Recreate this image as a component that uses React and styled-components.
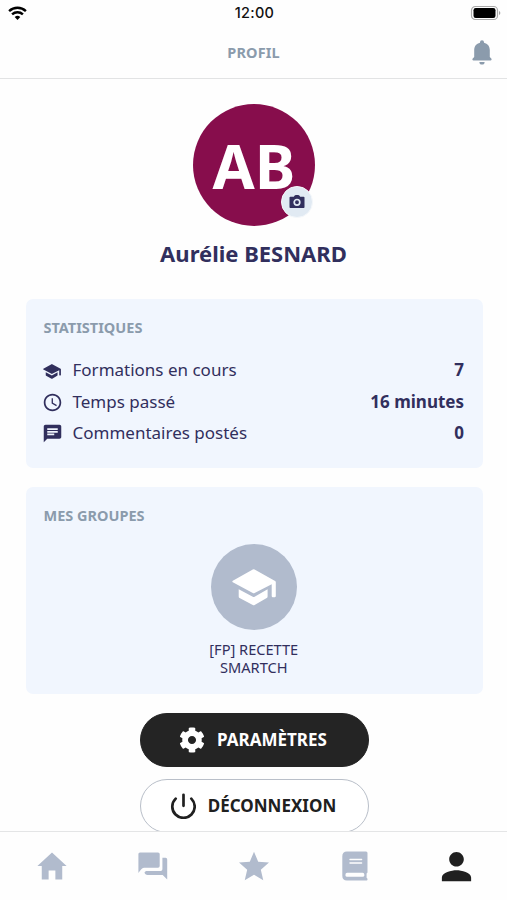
import styled, { createGlobalStyle } from "styled-components";
import { FaCog } from "react-icons/fa";
import { IoMdHome, IoMdPerson, IoMdStar } from "react-icons/io";
import { MdAccessTime, MdChat } from "react-icons/md";

const GlobalStyle = createGlobalStyle`
  * {
    box-sizing: border-box;
  }
  body {
    margin: 0;
    background: #fefefe;
    font-family: "Noto Sans", "Open Sans", sans-serif;
  }
  svg {
    display: block;
    flex-shrink: 0;
  }
`;

const Screen = styled.div`
  width: 507px;
  height: 900px;
  display: flex;
  flex-direction: column;
  overflow: hidden;
  color: #312f5d;
`;

const StatusBar = styled.div`
  height: 26px;
  flex-shrink: 0;
  display: grid;
  grid-template-columns: 1fr auto 1fr;
  align-items: center;
  padding: 0 6px 0 8px;
`;

const Clock = styled.span`
  font-family: Inter, sans-serif;
  font-size: 14.5px;
  font-weight: 500;
  letter-spacing: 0.25px;
  line-height: 26px;
  color: #111;
`;

const StatusEnd = styled.div`
  justify-self: end;
`;

const Header = styled.header`
  height: 53px;
  flex-shrink: 0;
  display: grid;
  grid-template-columns: 1fr auto 1fr;
  align-items: center;
  padding: 0 15px;
  border-bottom: 1px solid #e2e3e4;
`;

const HeaderTitle = styled.h1`
  grid-column: 2;
  margin: 0;
  padding-bottom: 1px;
  font-size: 14.5px;
  line-height: 20px;
  font-weight: 700;
  letter-spacing: 0.1px;
  color: #8b9bac;
`;

const Content = styled.main`
  flex: 1;
  min-height: 0;
  overflow: hidden;
  display: flex;
  flex-direction: column;
  align-items: center;
  padding: 25px 24.5px 0 25.5px;
`;

const Avatar = styled.div`
  position: relative;
  width: 122px;
  height: 122px;
  flex-shrink: 0;
  border-radius: 50%;
  background: #870d4c;
  color: #fff;
  font-size: 61px;
  line-height: 124px;
  font-weight: 700;
  text-align: center;
`;

const CameraBadge = styled.div`
  position: absolute;
  right: 2px;
  bottom: 8px;
  width: 32px;
  height: 32px;
  border-radius: 50%;
  border: 1px solid #f5f8fb;
  background: #e1eaf3;
  display: flex;
  align-items: center;
  justify-content: center;
`;

const Name = styled.h2`
  margin: 11px 1px 0 0;
  font-size: 22px;
  line-height: 32px;
  font-weight: 700;
`;

const Card = styled.section`
  width: 100%;
  height: ${(props) => props.$height}px;
  flex-shrink: 0;
  margin-top: ${(props) => props.$gap}px;
  padding: 17px 18.5px 0 18px;
  border-radius: 7px;
  background: #f1f6fe;
`;

const CardTitle = styled.h3`
  margin: 0;
  font-size: 14.5px;
  line-height: 22px;
  font-weight: 700;
  color: #8b9bac;
`;

const StatList = styled.ul`
  list-style: none;
  margin: 16px 0 0;
  padding: 0;
`;

const Stat = styled.li`
  height: 31.4px;
  display: flex;
  align-items: center;
  font-size: 17px;
`;

const StatIcon = styled.span`
  width: 20px;
  margin: 3px 10.5px 0 -1.5px;
  display: flex;
  justify-content: center;
`;

const StatLabel = styled.span`
  flex: 1;
`;

const StatValue = styled.span`
  font-weight: 700;
`;

const Group = styled.div`
  display: flex;
  flex-direction: column;
  align-items: center;
  margin-top: 18px;
`;

const GroupIcon = styled.div`
  width: 86px;
  height: 86px;
  border-radius: 50%;
  background: #b1bbcd;
  color: #fff;
  display: flex;
  align-items: center;
  justify-content: center;
`;

const GroupName = styled.p`
  width: 110px;
  margin: 11px 0 0;
  font-size: 14.6px;
  line-height: 17.5px;
  text-align: center;
`;

const Button = styled.button`
  width: 229px;
  height: 54px;
  flex-shrink: 0;
  margin: ${(props) => props.$gap}px 0 0;
  padding: 0 2px 1px 0;
  display: flex;
  align-items: center;
  justify-content: center;
  gap: 12px;
  border-radius: 27px;
  border: 1px solid ${(props) => (props.$dark ? "#242424" : "#b9bfc9")};
  background: ${(props) => (props.$dark ? "#242424" : "#fff")};
  color: ${(props) => (props.$dark ? "#fff" : "#202020")};
  font: 700 17px "Noto Sans", sans-serif;
`;

const TabBar = styled.nav`
  height: 69px;
  flex-shrink: 0;
  display: grid;
  grid-template-columns: repeat(5, 1fr);
  padding-left: 1px;
  border-top: 1px solid #e4e5e6;
  background: #fefefe;
`;

const Tab = styled.a`
  display: flex;
  align-items: center;
  justify-content: center;
  color: ${(props) => (props.$active ? "#202020" : "#b1bbcd")};
`;

const WifiIcon = () => (
  <svg width="20" height="15" viewBox="0 0 20 15" fill="none" stroke="#000" strokeWidth="2.4">
    <path d="M1.1 5.1a12.3 12.3 0 0 1 16.8 0" />
    <path d="M4.1 8.4a7.9 7.9 0 0 1 10.8 0" />
    <path d="M9.5 14 6.7 11.1a4 4 0 0 1 5.6 0z" fill="#000" stroke="none" />
  </svg>
);

const BatteryIcon = () => (
  <svg width="31" height="16" viewBox="0 0 31 16">
    <rect x="1.5" y="1.5" width="26" height="13" rx="3.8" fill="#fff" stroke="#aaa" strokeWidth="1.2" />
    <rect x="3.5" y="3" width="22" height="10" rx="2.2" fill="#000" />
    <path d="M29.1 6c1.6.5 1.6 3.5 0 4z" fill="#999" />
  </svg>
);

const BellIcon = () => (
  <svg width="20" height="25" viewBox="0 0 20 25" fill="#8b9bac">
    <path d="M10 .3a2 2 0 0 1 2 2v.5c3.7.8 5.8 3.6 5.8 7.2v7l1.5 1.5c.7.9.3 1.9-.8 1.9h-17c-1.1 0-1.500-1-.8-1.9L2.2 17v-7c0-3.6 2.100-6.4 5.8-7.2v-.5a2 2 0 0 1 2-2z" />
    <path d="M7.4 22h5.2a2.6 2.6 0 0 1-5.2 0z" />
  </svg>
);

const CameraIcon = () => (
  <svg width="16" height="14" viewBox="0 0 16 14">
    <path
      d="M4.8 1.7 5.7.6C6 .2 6.3 0 6.8 0h2.4c.5 0 .8.2 1.1.6l.9 1.1h3.4c.6 0 .9.4.9.9v9.4c0 .6-.4 1-1 1h-13c-.6 0-1-.4-1-1V2.6c0-.5.4-.9.9-.9z"
      fill="#312f5d"
    />
    <circle cx="8" cy="7.3" r="2.8" fill="none" stroke="#e1eaf3" strokeWidth="1.7" />
  </svg>
);

const PowerIcon = () => (
  <svg width="26" height="26" viewBox="0 0 26 26" fill="none" stroke="#202020" strokeWidth="2.7" strokeLinecap="round">
    <path d="M13.5 1.800v11" />
    <path d="M5.7 5.600a11.200 11.200 0 1 0 15.600 0" />
  </svg>
);

const SchoolIcon = ({ width }) => (
  <svg width={width} viewBox="0 0 44 37" fill="currentColor">
    <path d="M20.8.5q.9-.5 1.800 0l20.500 11.400q.7.4.7 1.200v14q0 1.200-1.200 1.200h-1.700q-1.200 0-1.200-1.200V15.200L22.600 24q-.9.500-1.800 0L.8 13.300q-1-.8 0-1.600z" />
    <path d="M6.700 20.300 20.800 27.800q.9.500 1.800 0L35.600 20.300v7.200q0 1-.9 1.500l-12.100 7q-.9.500-1.800 0L7.600 29q-.9-.5-.9-1.500z" />
  </svg>
);

const ChatIcon = () => (
  <svg width="30" height="28" viewBox="0 0 30 28" fill="currentColor">
    <path d="M2 .4h18q1.700 0 1.700 1.700v12q0 1.700-1.700 1.700H6.200Q3.800 15.800.4 21V2.100Q.4.400 2 .4z" />
    <path d="M24.400 5.800h3.200q1.600 0 1.600 1.600V27.600L24.700 23H9.600q-2.600 0-3.100-2.700L8 19h14.700q1.700 0 1.700-1.700z" />
  </svg>
);

const BookIcon = () => (
  <svg width="26" height="30" viewBox="0 0 26 30">
    <path
      d="M5 .5h19q1.500 0 1.500 1.500v19.500l-.9 1.100v4.200l.9 1v.7q0 1-1 1H5Q.3 29.500.3 24.700V5.200Q.3.500 5 .5z"
      fill="currentColor"
    />
    <rect x="3.500" y="21.800" width="18.800" height="4" rx="1.600" fill="#fefefe" />
    <path d="M8 8.500h11.600M8 12h11.600" stroke="#fefefe" strokeWidth="1.400" strokeLinecap="round" />
  </svg>
);

const stats = [
  { icon: <SchoolIcon width={18} />, label: "Formations en cours", value: "7" },
  { icon: <MdAccessTime size={21} />, label: "Temps passé", value: "16 minutes" },
  { icon: <MdChat size={21} />, label: "Commentaires postés", value: "0" },
];

const tabs = [
  { id: "home", icon: <IoMdHome size={36} /> },
  { id: "chat", icon: <ChatIcon /> },
  { id: "favorites", icon: <IoMdStar size={38} /> },
  { id: "library", icon: <BookIcon /> },
  { id: "profile", icon: <IoMdPerson size={39} />, active: true },
];

export default () => {
  return (
    <>
      <GlobalStyle />
      <Screen>
        <StatusBar>
          <WifiIcon />
          <Clock>12:00</Clock>
          <StatusEnd>
            <BatteryIcon />
          </StatusEnd>
        </StatusBar>
        <Header>
          <HeaderTitle>PROFIL</HeaderTitle>
          <StatusEnd>
            <BellIcon />
          </StatusEnd>
        </Header>
        <Content>
          <Avatar>
            AB
            <CameraBadge>
              <CameraIcon />
            </CameraBadge>
          </Avatar>
          <Name>Aurélie BESNARD</Name>
          <Card $height={169} $gap={30}>
            <CardTitle>STATISTIQUES</CardTitle>
            <StatList>
              {stats.map((s) => (
                <Stat key={s.label}>
                  <StatIcon>{s.icon}</StatIcon>
                  <StatLabel>{s.label}</StatLabel>
                  <StatValue>{s.value}</StatValue>
                </Stat>
              ))}
            </StatList>
          </Card>
          <Card $height={207} $gap={19}>
            <CardTitle>MES GROUPES</CardTitle>
            <Group>
              <GroupIcon>
                <SchoolIcon width={44} />
              </GroupIcon>
              <GroupName>[FP] RECETTE SMARTCH</GroupName>
            </Group>
          </Card>
          <Button $dark $gap={19}>
            <FaCog size={26} />
            PARAMÈTRES
          </Button>
          <Button $gap={12}>
            <PowerIcon />
            DÉCONNEXION
          </Button>
        </Content>
        <TabBar>
          {tabs.map((t) => (
            <Tab key={t.id} $active={t.active}>
              {t.icon}
            </Tab>
          ))}
        </TabBar>
      </Screen>
    </>
  );
};
